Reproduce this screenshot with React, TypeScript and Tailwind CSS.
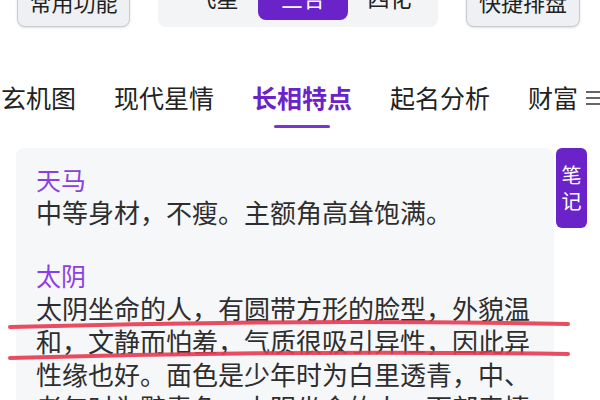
import React from 'react';

const font = { fontFamily: '"Noto Sans CJK SC", "Noto Sans", sans-serif' };

const tabs = ['玄机图', '现代星情', '长相特点', '起名分析', '财富'];

export default function App() {
  return (
    <div className="relative w-[600px] h-[400px] overflow-hidden bg-white text-[#222]" style={font}>
      {/* 顶部按钮 */}
      <div className="flex items-end -mt-[26px] h-[53px]">
        <div className="ml-[17px] w-[113px] h-[52px] rounded-lg border border-[#c8cbd0] bg-[#eef0f3] shadow-sm flex items-center justify-center text-[22px]">
          常用功能
        </div>
        <div className="ml-[28px] w-[280px] h-[53px] rounded-lg bg-[#f3f4f5] flex items-end pb-[7px] px-[7px]">
          <div className="flex-1 h-[46px] flex items-center justify-center text-[22px] pl-[10px]">飞星</div>
          <div className="w-[90px] h-[46px] rounded-lg bg-[#6a22c9] text-white flex items-center justify-center text-[22px]">三合</div>
          <div className="flex-1 h-[46px] flex items-center justify-center text-[22px]">四化</div>
        </div>
        <div className="ml-[28px] w-[114px] h-[52px] rounded-lg border border-[#c8cbd0] bg-[#eef0f3] shadow-sm flex items-center justify-center text-[22px]">
          快捷排盘
        </div>
      </div>

      {/* 标签栏 */}
      <div className="mt-[54px] flex items-start pl-[1px] whitespace-nowrap">
        <div className="flex gap-[38px] text-[25px] leading-[32px]">
          {tabs.map((t) => (
            <div key={t} className="flex flex-col items-center">
              <span className={t === '长相特点' ? 'font-bold text-[#6a22c9]' : 'text-[#222]'}>{t}</span>
              {t === '长相特点' && <span className="mt-[12px] w-[56px] h-[3px] rounded-full bg-[#7a34d6]" />}
            </div>
          ))}
        </div>
        <div className="ml-[8px] mt-[10px] flex flex-col gap-[4px]">
          <span className="w-[16px] h-[2px] bg-[#666]" />
          <span className="w-[16px] h-[2px] bg-[#666]" />
          <span className="w-[16px] h-[2px] bg-[#666]" />
        </div>
      </div>

      {/* 内容卡片 */}
      <div className="mt-[20px] flex items-start">
        <div className="ml-[16px] w-[538px] rounded-lg bg-[#f6f7f9] pt-[16px] pl-[20px] pr-[20px] pb-[20px] text-[26px] leading-[33px] text-[#2e2e2e]">
          <div className="text-[#8b3fe0] text-[25px] leading-[31px]">天马</div>
          <div>中等身材，不瘦。主额角高耸饱满。</div>
          <div className="mt-[32px] text-[#8b3fe0] text-[25px] leading-[31px]">太阴</div>
          <div>
            太阴坐命的人，有圆带方形的脸型，外貌温和，文静而怕羞，气质很吸引异性，因此异性缘也好。面色是少年时为白里透青，中、老年时为黯青色。太阴坐命的人，面部表情
          </div>
        </div>
        <div className="ml-[2px] w-[31px] h-[80px] rounded-md bg-[#6a22c9] text-white text-[20px] leading-[26px] flex flex-col items-center justify-center">
          <span>笔</span>
          <span>记</span>
        </div>
      </div>

      {/* 红色划线标注 */}
      <svg className="absolute left-0 top-0 pointer-events-none" width="600" height="400">
        <path d="M10 327 Q 290 319 568 324" stroke="#e8384f" strokeWidth="4" fill="none" strokeLinecap="round" opacity="0.9" />
        <path d="M10 358 Q 290 350 568 354" stroke="#e8384f" strokeWidth="4" fill="none" strokeLinecap="round" opacity="0.9" />
      </svg>
    </div>
  );
}
